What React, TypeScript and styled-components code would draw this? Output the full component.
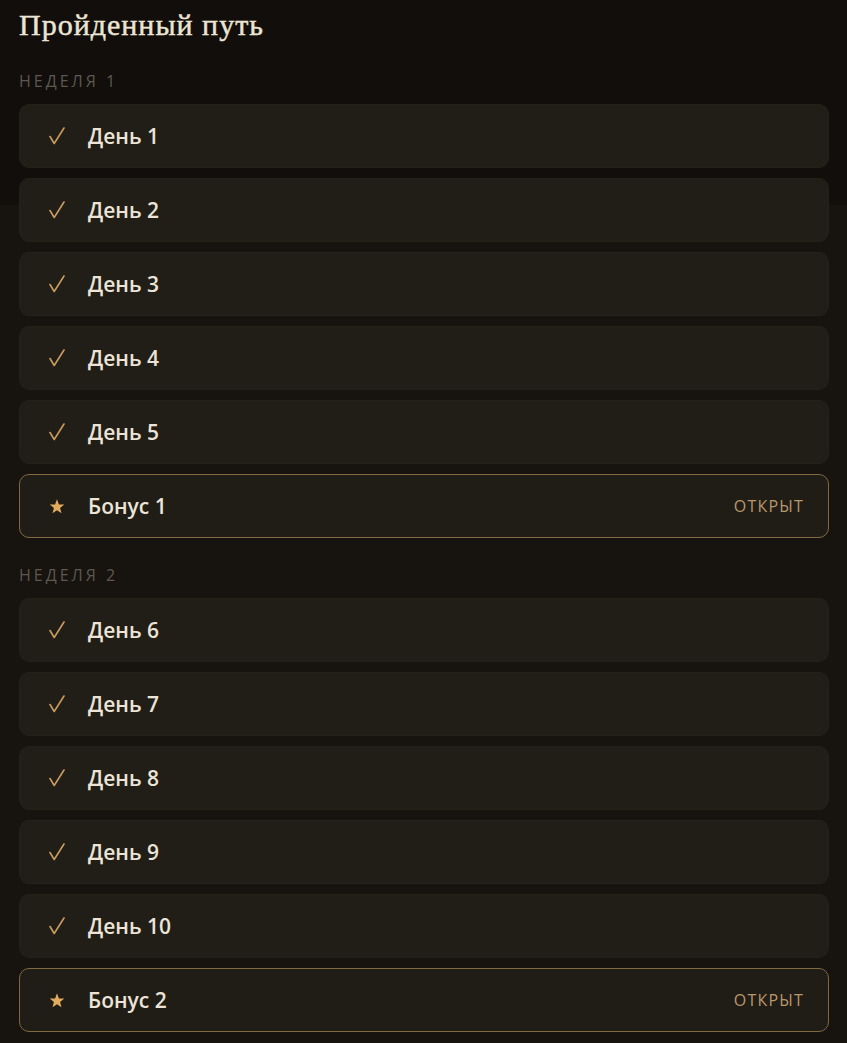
import * as React from 'react'
import styled, { createGlobalStyle } from 'styled-components'

type Item = { label: string; bonus?: boolean }

const weeks: { title: string; items: Item[] }[] = [
  {
    title: 'Неделя 1',
    items: [
      { label: 'День 1' },
      { label: 'День 2' },
      { label: 'День 3' },
      { label: 'День 4' },
      { label: 'День 5' },
      { label: 'Бонус 1', bonus: true },
    ],
  },
  {
    title: 'Неделя 2',
    items: [
      { label: 'День 6' },
      { label: 'День 7' },
      { label: 'День 8' },
      { label: 'День 9' },
      { label: 'День 10' },
      { label: 'Бонус 2', bonus: true },
    ],
  },
]

const CheckIcon = () => (
  <svg width="16" height="18" viewBox="0 0 16 18" fill="none">
    <path
      d="M1 9.5 L5.2 16.5 L15 1"
      stroke="#c99d5f"
      strokeWidth="1.6"
      strokeLinecap="round"
      strokeLinejoin="round"
    />
  </svg>
)

const StarIcon = () => (
  <svg width="16" height="15" viewBox="0 0 24 23">
    <path
      d="M12 0.5 L14.9 8.3 L23.2 8.6 L16.7 13.8 L18.9 21.9 L12 17.3 L5.1 21.9 L7.3 13.8 L0.8 8.6 L9.1 8.3 Z"
      fill="#e2ab5e"
    />
  </svg>
)

const App = () => {
  return (
    <>
      <GlobalStyle />
      <Page>
        <Title>Пройденный путь</Title>
        {weeks.map((week) => (
          <Week key={week.title}>
            <WeekLabel>{week.title}</WeekLabel>
            <List>
              {week.items.map((item) => (
                <Row key={item.label} $bonus={item.bonus}>
                  <Icon>{item.bonus ? <StarIcon /> : <CheckIcon />}</Icon>
                  <Label>{item.label}</Label>
                  {item.bonus && <Status>Открыт</Status>}
                </Row>
              ))}
            </List>
          </Week>
        ))}
      </Page>
    </>
  )
}

export default App

// Styles
const GlobalStyle = createGlobalStyle`
  html, body {
    margin: 0;
    padding: 0;
    background: linear-gradient(#110e0b 0, #110e0b 205px, #17130f 205px);
    background-color: #17130f;
    min-height: 100%;
  }
`

const Page = styled.div`
  padding: 8px 18px 12px 19px;
  display: flex;
  flex-direction: column;
`

const Title = styled.h1`
  margin: 0 0 30px;
  font-family: 'Liberation Serif', 'DejaVu Serif', serif;
  font-weight: 400;
  font-size: 30px;
  line-height: 34px;
  letter-spacing: 1px;
  color: #ece4d4;
  -webkit-text-stroke: 0.45px #ece4d4;
`

const Week = styled.section`
  display: flex;
  flex-direction: column;
  & + & {
    margin-top: 28px;
  }
`

const WeekLabel = styled.div`
  font-family: 'Open Sans', 'Noto Sans', sans-serif;
  font-size: 16px;
  line-height: 18px;
  letter-spacing: 3px;
  text-transform: uppercase;
  color: #5e5850;
  margin-bottom: 14px;
`

const List = styled.div`
  display: flex;
  flex-direction: column;
  gap: 10px;
`

const Row = styled.div<{ $bonus?: boolean }>`
  height: 64px;
  box-sizing: border-box;
  display: flex;
  align-items: center;
  padding: 0 24px 0 28px;
  border-radius: 10px;
  background: ${(p) => (p.$bonus ? '#201c16' : '#211d17')};
  border: 1px solid ${(p) => (p.$bonus ? '#836942' : '#252018')};
`

const Icon = styled.span`
  width: 18px;
  display: flex;
  justify-content: center;
  align-items: center;
  margin-right: 22px;
`

const Label = styled.span`
  flex: 1;
  font-family: 'Open Sans', 'Noto Sans', sans-serif;
  font-weight: 600;
  font-size: 21px;
  color: #ebe4d7;
`

const Status = styled.span`
  font-family: 'Open Sans', 'Noto Sans', sans-serif;
  font-weight: 500;
  font-size: 16px;
  letter-spacing: 1.2px;
  text-transform: uppercase;
  color: #b8986a;
`
